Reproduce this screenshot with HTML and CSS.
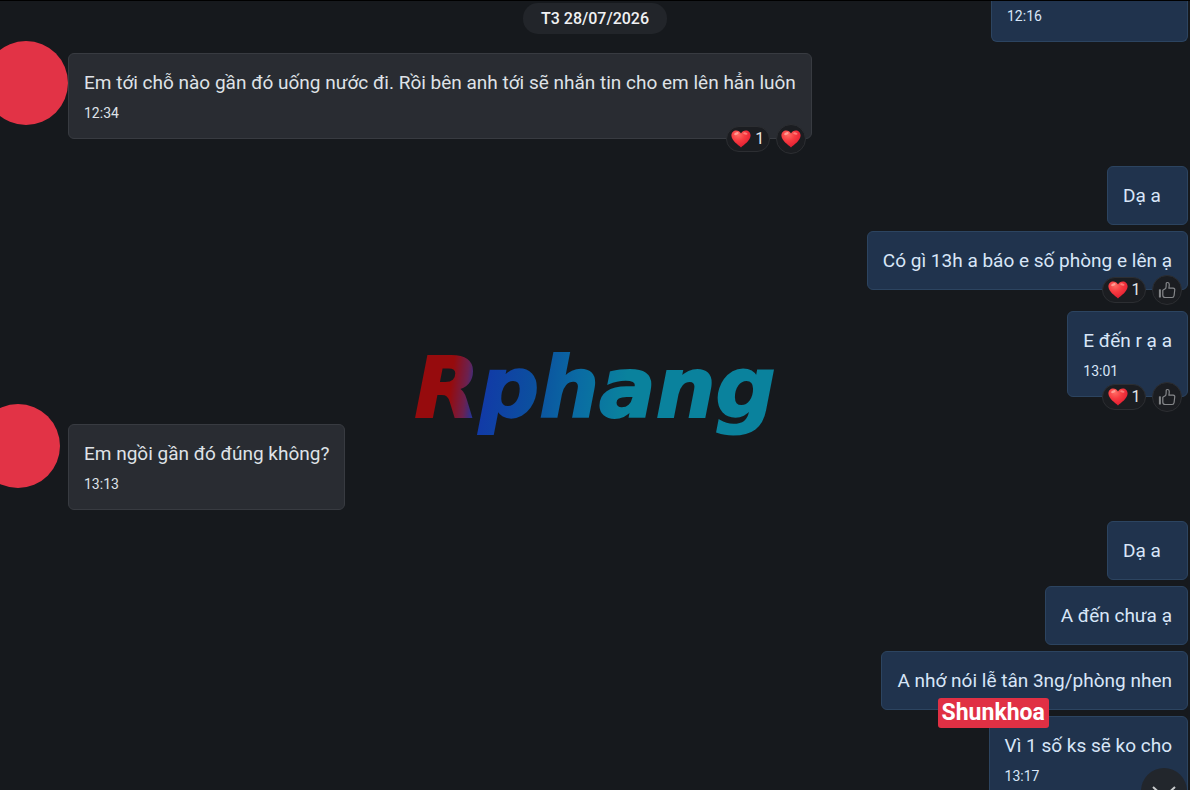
FILE: index.html
```html
<!DOCTYPE html>
<html lang="vi">
<head>
<meta charset="utf-8">
<meta name="viewport" content="width=device-width, initial-scale=1">
<title>Chat</title>
<link rel="stylesheet" href="styles.css">
</head>
<body>
<svg class="defs" width="0" height="0" aria-hidden="true">
  <defs>
    <radialGradient id="heartFill" cx="0.35" cy="0.25" r="0.8">
      <stop offset="0" stop-color="#ff6a62"/>
      <stop offset="0.45" stop-color="#f73a40"/>
      <stop offset="1" stop-color="#e01a30"/>
    </radialGradient>
    <symbol id="heart" viewBox="0 0 20 18">
      <path fill="url(#heartFill)" d="M10 17.4C7.2 15.2 .4 10.4.4 5.6.4 2.6 2.6.6 5.2.6 7.300.6 9 1.800 10 3.600 11 1.800 12.700.6 14.800.6c2.600 0 4.800 2 4.800 5 0 4.800-6.800 9.600-9.600 11.800z"/>
      <ellipse cx="5.400" cy="3.600" rx="2.400" ry="1.300" fill="#ffb3a8" opacity=".75" transform="rotate(-24 5.400 3.600)"/>
      <ellipse cx="14.400" cy="3.500" rx="2.200" ry="1.100" fill="#ffa69c" opacity=".6" transform="rotate(14 14.400 3.500)"/>
    </symbol>
    <symbol id="thumb" viewBox="0 0 18 18">
      <g fill="none" stroke="#85878a" stroke-width="1.200" stroke-linejoin="round" stroke-linecap="round">
        <path d="M1.500 8.800v7.200h.8V8.800z"/>
        <path d="M4.800 9.300 7.600 7.600C8.300 6.500 8.200 4.500 8.200 2.600 8.200 1 10.900 1.100 11.200 3.100c.2 1.400-.2 2.900-.3 4.100h4.200c1.500 0 1.900 1 1.600 2.100l-.6 5.200c-.2 1.300-.8 2-2 2H7.300c-1.600 0-2.500-.7-2.500-2.200z"/>
      </g>
    </symbol>
  </defs>
</svg>
<main class="chat">
  <header class="top">
    <time class="date" datetime="2026-07-28">T3 28/07/2026</time>
    <div class="bubble out cut"><time class="time">12:16</time></div>
  </header>

  <section class="row first">
    <span class="avatar"></span>
    <div class="bubble">
      <p>Em tới chỗ nào gần đó uống nước đi. Rồi bên anh tới sẽ nhắn tin cho em lên hẳn luôn</p>
      <time class="time">12:34</time>
      <div class="reactions">
        <button class="count"><svg class="heart"><use href="#heart"/></svg>1</button>
        <button class="react" aria-label="Thả tim"><svg class="heart"><use href="#heart"/></svg></button>
      </div>
    </div>
  </section>

  <section class="row mine reply">
    <div class="bubble out"><p>Dạ a</p></div>
    <div class="bubble out"><p>Có gì 13h a báo e số phòng e lên ạ</p>
      <div class="reactions">
        <button class="count"><svg class="heart"><use href="#heart"/></svg>1</button>
        <button class="react" aria-label="Thích"><svg class="thumb"><use href="#thumb"/></svg></button>
      </div>
    </div>
    <div class="bubble out after-reaction"><p>E đến r ạ a</p><time class="time">13:01</time>
      <div class="reactions">
        <button class="count"><svg class="heart"><use href="#heart"/></svg>1</button>
        <button class="react" aria-label="Thích"><svg class="thumb"><use href="#thumb"/></svg></button>
      </div>
    </div>
  </section>

  <section class="row reply">
    <span class="avatar low"></span>
    <div class="bubble">
      <p>Em ngồi gần đó đúng không?</p>
      <time class="time">13:13</time>
    </div>
  </section>

  <section class="row mine first">
    <div class="bubble out"><p>Dạ a</p></div>
    <div class="bubble out"><p>A đến chưa ạ</p></div>
    <div class="bubble out"><p>A nhớ nói lễ tân 3ng/phòng nhen</p></div>
    <div class="bubble out"><p>Vì 1 số ks sẽ ko cho</p><time class="time">13:17</time>
      <span class="tag">Shunkhoa</span>
    </div>
  </section>

  <div class="logo">Rphang</div>
  <button class="down" aria-label="Xuống cuối">
    <svg viewBox="0 0 46 46"><path d="m12 19 11 10 11-10" fill="none" stroke="#c8cacc" stroke-width="2"/></svg>
  </button>
</main>
</body>
</html>
```
FILE: styles.css
```css
* { box-sizing: border-box; }
body {
  margin: 0;
  background: #16191d;
  color: #dfe2e7;
  font: 19px/26px Roboto, "Noto Sans", sans-serif;
}
.defs { position: absolute; }
p { margin: 0; }
button { font: inherit; color: inherit; cursor: pointer; }

.chat {
  position: relative;
  height: 100vh;
  overflow: hidden;
  border-top: 1px solid #000;
}
.top {
  display: grid;
  grid-template-columns: 1fr auto 1fr;
}
.date {
  grid-column: 2;
  align-self: start;
  margin-top: 2px;
  padding: 6px 18px 5px;
  border-radius: 15px;
  background: #22252a;
  color: #f0f1f3;
  font-size: 16px;
  font-weight: 500;
  line-height: 20px;
}
.row { display: flex; padding-left: 68px; position: relative; }
.first { margin-top: 11px; }
.reply { margin-top: 27px; }
.mine {
  flex-direction: column;
  align-items: flex-end;
  gap: 6px;
  padding: 0 2px 0 0;
}
.bubble {
  position: relative;
  min-width: 81px;
  padding: 16px 15px 15px;
  border: 1px solid #383b41;
  border-radius: 6px;
  background: #292c32;
}
.out {
  border-color: #2c4460;
  background: #20334d;
  color: #d8e6f8;
}
.cut {
  justify-self: end;
  width: 197px;
  margin-right: 2px;
  padding-top: 5px;
  border-top: 0;
  border-radius: 0 0 6px 6px;
}
.after-reaction { margin-top: 15px; }
.time {
  display: block;
  font-size: 14px;
  line-height: 20px;
}
p + .time { margin-top: 7px; }
.avatar {
  position: absolute;
  left: -16px;
  top: -12px;
  width: 84px;
  height: 84px;
  border-radius: 50%;
  background: #e23346;
}
.low { left: -24px; top: -20px; }

.reactions {
  position: absolute;
  right: 5px;
  bottom: -16px;
  display: flex;
  align-items: center;
  gap: 6px;
  z-index: 1;
}
.reactions button {
  display: flex;
  align-items: center;
  justify-content: center;
  padding: 0;
  border: 1px solid #2c2e32;
  background: #1b1d21;
  color: #e4e6e9;
}
.reactions .count {
  gap: 4px;
  width: 44px;
  height: 26px;
  border-radius: 13px;
  font-size: 16px;
}
.reactions .react { width: 30px; height: 30px; border-radius: 50%; }
.heart { width: 20px; height: 18px; }
.thumb { width: 18px; height: 18px; }

.tag {
  position: absolute;
  left: -52px;
  top: -19px;
  padding: 2px 4px;
  border-radius: 3px;
  background: #e03044;
  color: #fff;
  font: 700 23px/26px Roboto, sans-serif;
}
.logo {
  position: absolute;
  left: 50%;
  top: 335px;
  transform: translateX(-50%);
  padding: 0 8px;
  background: linear-gradient(97deg, #960b0d 13%, #6b2150 17%, #1238a8 20%, #0c4f9f 34%, #0a6ca3 46%, #0a829d 58%, #0a829d);
  background-clip: text;
  -webkit-background-clip: text;
  color: transparent;
  -webkit-text-stroke: 2px transparent;
  font: italic 700 84px/104px "DejaVu Sans", sans-serif;
  pointer-events: none;
}
.down {
  position: absolute;
  right: 3px;
  bottom: -24px;
  width: 46px;
  height: 46px;
  padding: 0;
  border: 0;
  border-radius: 50%;
  background: #22262c;
}
.down svg { display: block; width: 46px; height: 46px; }
```
